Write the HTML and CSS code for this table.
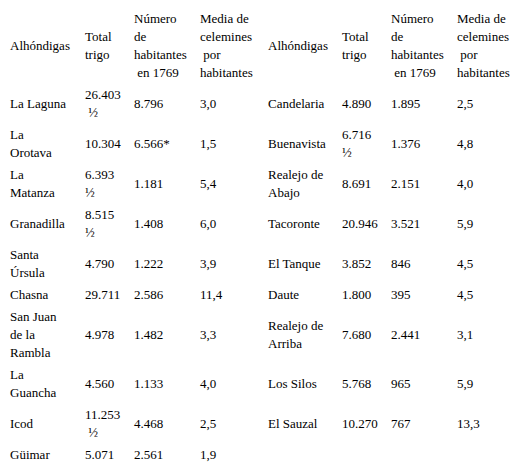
FILE: index.html
```html
<!DOCTYPE html>
<html>
<head>
<meta charset="utf-8">
<title>Alhóndigas</title>
<link rel="stylesheet" href="styles.css">
</head>
<body>
<table class="grain">
  <colgroup>
    <col class="c-name"><col class="c-total"><col class="c-hab"><col class="c-media">
    <col class="c-name2"><col class="c-total"><col class="c-hab"><col class="c-media2">
  </colgroup>
  <thead>
    <tr>
      <th>Alhóndigas</th>
      <th>Total<br>trigo</th>
      <th>Número<br>de<br>habitantes<br>&nbsp;en 1769</th>
      <th>Media de<br>celemines<br>&nbsp;por<br>habitantes</th>
      <th>Alhóndigas</th>
      <th>Total<br>trigo</th>
      <th>Número<br>de<br>habitantes<br>&nbsp;en 1769</th>
      <th>Media de<br>celemines<br>&nbsp;por<br>habitantes</th>
    </tr>
  </thead>
  <tbody>
    <tr>
      <td>La Laguna</td><td>26.403<br>&nbsp;½</td><td>8.796</td><td>3,0</td>
      <td>Candelaria</td><td>4.890</td><td>1.895</td><td>2,5</td>
    </tr>
    <tr>
      <td>La<br>Orotava</td><td>10.304</td><td>6.566*</td><td>1,5</td>
      <td>Buenavista</td><td>6.716<br>½</td><td>1.376</td><td>4,8</td>
    </tr>
    <tr>
      <td>La<br>Matanza</td><td>6.393<br>½</td><td>1.181</td><td>5,4</td>
      <td>Realejo de<br>Abajo</td><td>8.691</td><td>2.151</td><td>4,0</td>
    </tr>
    <tr>
      <td>Granadilla</td><td>8.515<br>½</td><td>1.408</td><td>6,0</td>
      <td>Tacoronte</td><td>20.946</td><td>3.521</td><td>5,9</td>
    </tr>
    <tr>
      <td>Santa<br>Úrsula</td><td>4.790</td><td>1.222</td><td>3,9</td>
      <td>El Tanque</td><td>3.852</td><td>846</td><td>4,5</td>
    </tr>
    <tr>
      <td>Chasna</td><td>29.711</td><td>2.586</td><td>11,4</td>
      <td>Daute</td><td>1.800</td><td>395</td><td>4,5</td>
    </tr>
    <tr>
      <td>San Juan<br>de la<br>Rambla</td><td>4.978</td><td>1.482</td><td>3,3</td>
      <td>Realejo de<br>Arriba</td><td>7.680</td><td>2.441</td><td>3,1</td>
    </tr>
    <tr>
      <td>La<br>Guancha</td><td>4.560</td><td>1.133</td><td>4,0</td>
      <td>Los Silos</td><td>5.768</td><td>965</td><td>5,9</td>
    </tr>
    <tr>
      <td>Icod</td><td>11.253<br>&nbsp;½</td><td>4.468</td><td>2,5</td>
      <td>El Sauzal</td><td>10.270</td><td>767</td><td>13,3</td>
    </tr>
    <tr>
      <td>Güimar</td><td>5.071</td><td>2.561</td><td>1,9</td>
      <td></td><td></td><td></td><td></td>
    </tr>
  </tbody>
</table>
</body>
</html>
```

FILE: styles.css
```css
body {
  margin: 8px;
  background: #ffffff;
  color: #000000;
}

.grain {
  font-family: "Liberation Serif", serif;
  font-size: 13px;
  border-collapse: collapse;
  border-spacing: 0;
  table-layout: fixed;
  width: 510px;
}

.grain th,
.grain td {
  padding: 2px;
  line-height: 18px;
  text-align: left;
  vertical-align: middle;
  font-weight: normal;
  white-space: nowrap;
}

.c-name { width: 75px; }
.c-total { width: 49px; }
.c-hab { width: 66px; }
.c-media { width: 68px; }
.c-name2 { width: 74px; }
.c-media2 { width: 63px; }
```
